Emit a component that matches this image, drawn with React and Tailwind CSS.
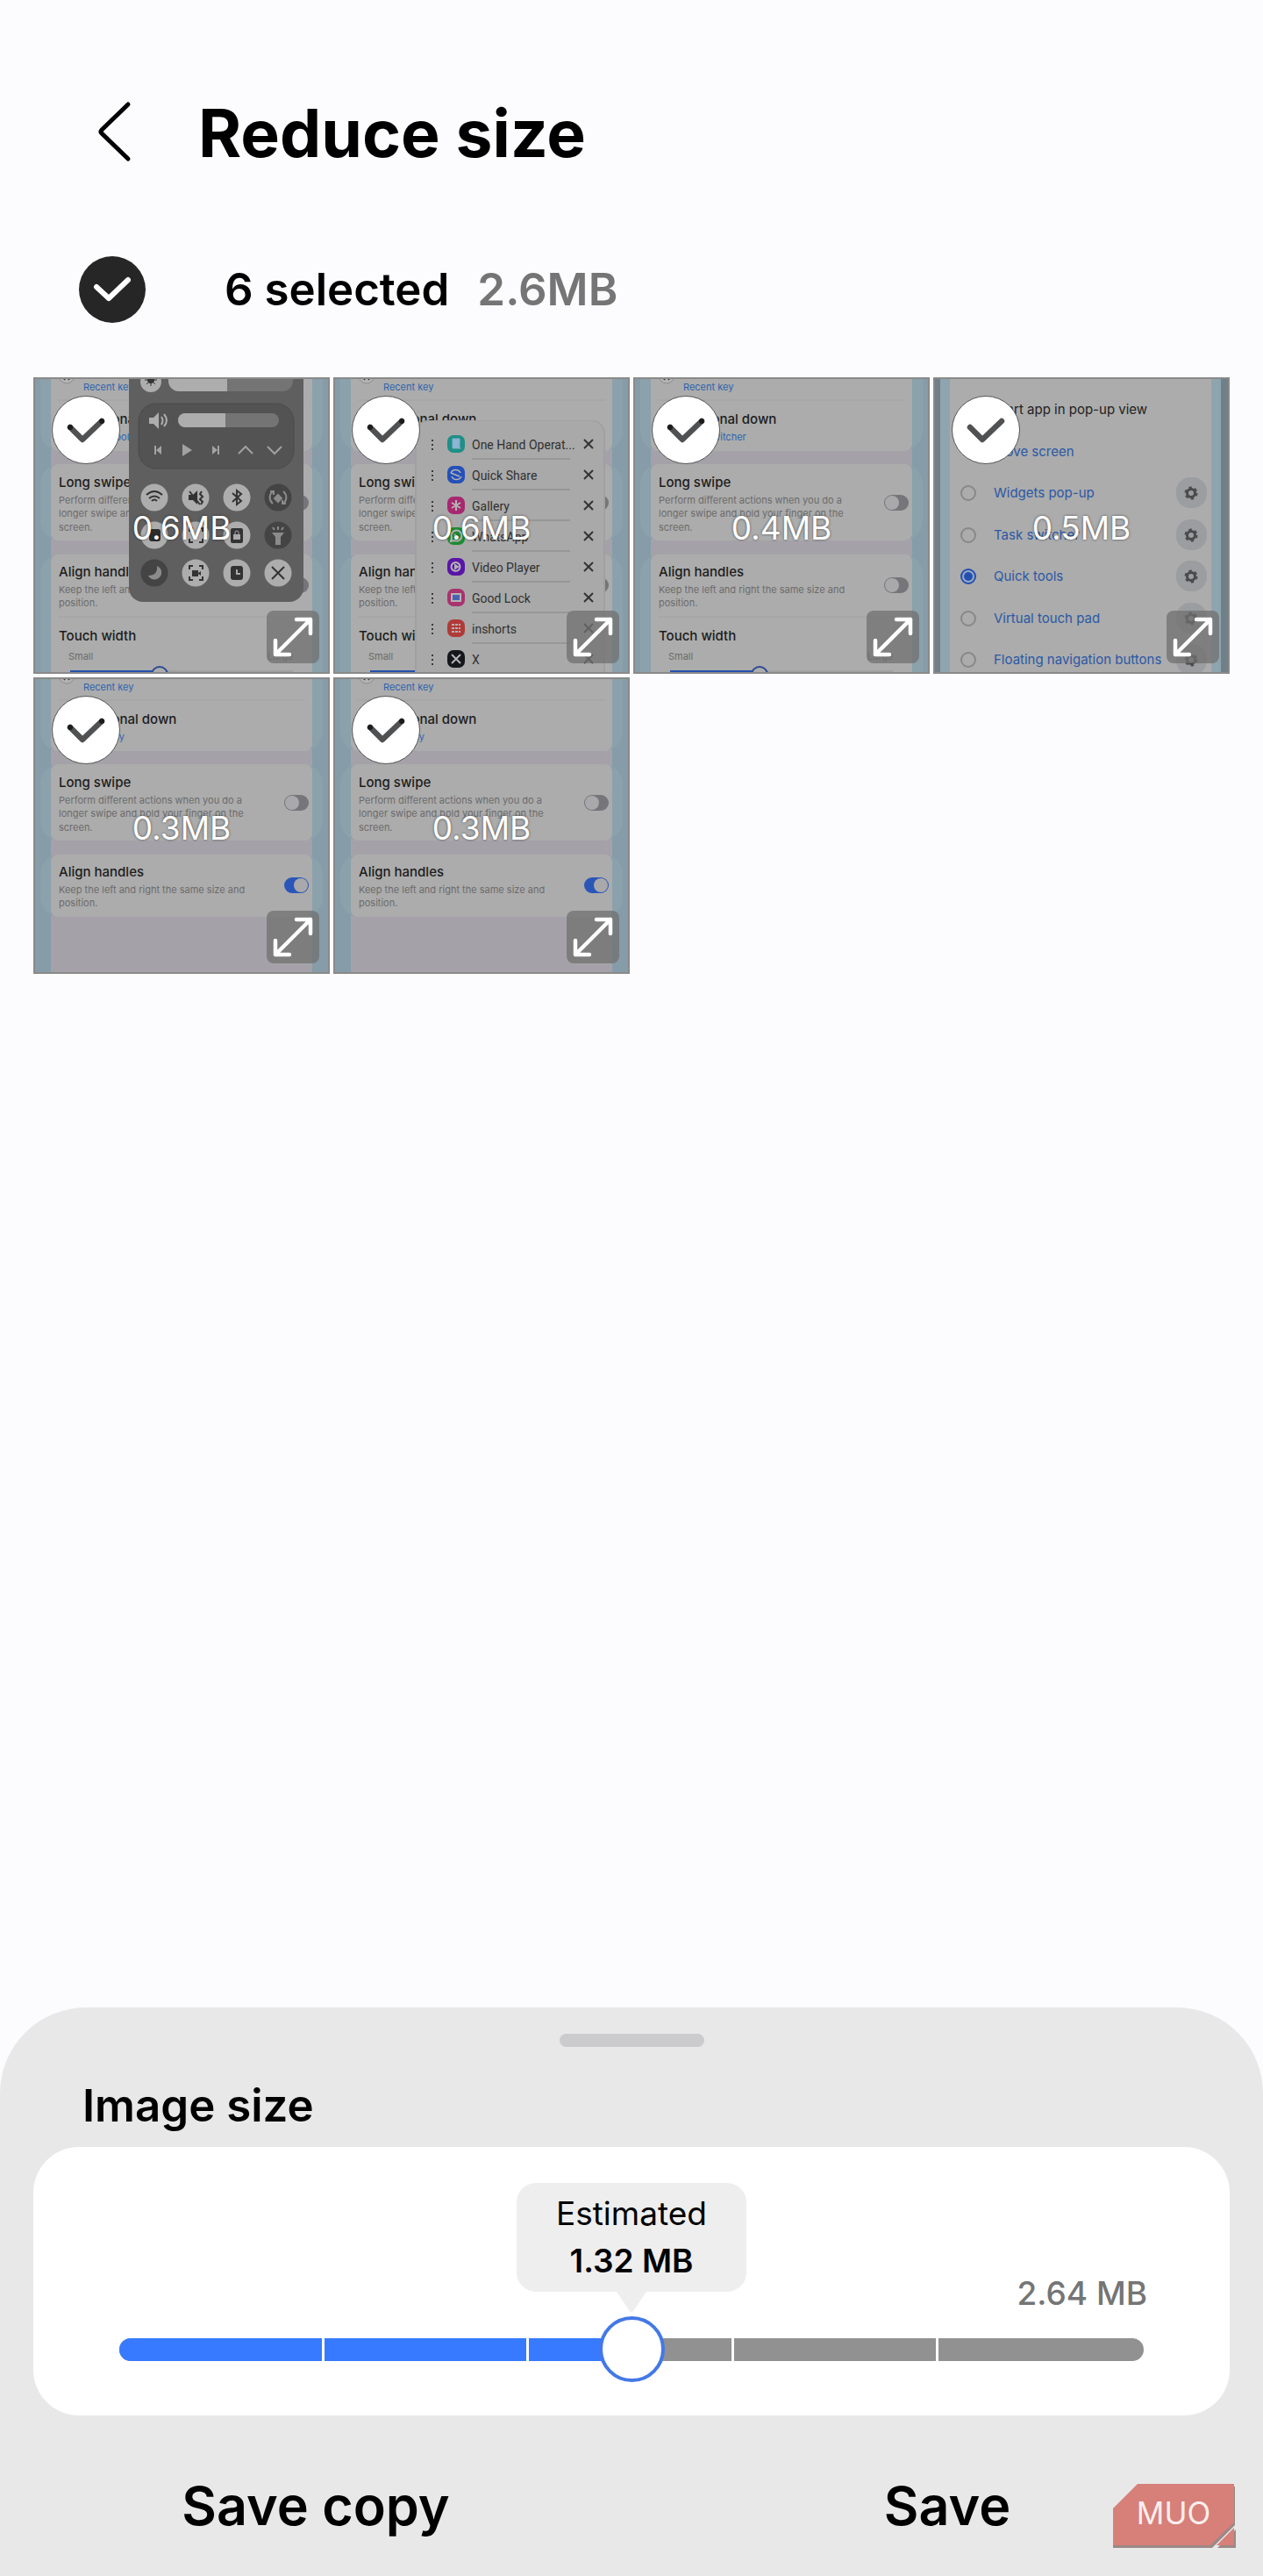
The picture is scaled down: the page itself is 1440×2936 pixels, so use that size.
import React, { useState } from 'react';

const images = [
  { id: 1, size: '0.6MB', scene: 'tools', action: 'Quick tools' },
  { id: 2, size: '0.6MB', scene: 'switcher', action: 'Task switcher' },
  { id: 3, size: '0.4MB', scene: 'settings', action: 'Task switcher' },
  { id: 4, size: '0.5MB', scene: 'actions' },
  { id: 5, size: '0.3MB', scene: 'aligned', action: 'Back key' },
  { id: 6, size: '0.3MB', scene: 'aligned', action: 'Back key' },
];

const apps = [
  { name: 'One Hand Operat...', color: '#1f8f86' },
  { name: 'Quick Share', color: '#2450b8' },
  { name: 'Gallery', color: '#a8286f' },
  { name: 'WhatsApp', color: '#1f8a35' },
  { name: 'Video Player', color: '#5a14a8' },
  { name: 'Good Lock', color: '#a8336e' },
  { name: 'inshorts', color: '#b03a38' },
  { name: 'X', color: '#15171a' },
];

const actions = ['Widgets pop-up', 'Task switcher', 'Quick tools', 'Virtual touch pad', 'Floating navigation buttons'];

const TOTAL_MB = 2.64;

const Toggle = ({ y, on }) => (
  <g>
    <rect x="286" y={y} width="28" height="18" rx="9" fill={on ? '#2a56b8' : '#75757a'} />
    <circle cx={on ? 305 : 295} cy={y + 9} r="8" fill="#a9a9ab" />
  </g>
);

const SettingsScene = ({ action, aligned }) => (
  <g>
    <rect width="338" height="338" fill="#869ca8" />
    <rect x="20" width="298" height="338" fill="#a4a2a8" />
    <g fill="#8ba1ab">
      <rect x="8" y="-30" width="322" height="114" rx="22" />
      <rect x="8" y="99" width="322" height="87" rx="22" />
      <rect x="8" y="202" width="322" height={aligned ? 71 : 180} rx="22" />
    </g>
    <g fill="#acacac">
      <rect x="20" y="-30" width="298" height="114" rx="8" />
      <rect x="20" y="99" width="298" height="87" rx="8" />
      <rect x="20" y="202" width="298" height={aligned ? 71 : 180} rx="8" />
    </g>
    <circle cx="38" cy="-2" r="9" fill="#b3b3b3" stroke="#8e8e8e" />
    <path d="M35 3l3-4 3 4" stroke="#333" strokeWidth="1.5" fill="none" />
    <path d="M28 26H310" stroke="#a2a2a2" />
    <g fontFamily="Inter, sans-serif">
      <g fontSize="11" fill="#2d65ae">
        <text x="57" y="15">Recent key</text>
        <text x="57" y="72">{action}</text>
      </g>
      <g fontSize="15" fontWeight="500" fill="#1c1c1c">
        <text x="57" y="53">Diagonal down</text>
        <text x="29" y="125">Long swipe</text>
        <text x="29" y="227">Align handles</text>
        {!aligned && <text x="29" y="300">Touch width</text>}
      </g>
      <g fontSize="11" fill="#6b6b6b">
        <text x="29" y="144">Perform different actions when you do a</text>
        <text x="29" y="159">longer swipe and hold your finger on the</text>
        <text x="29" y="175">screen.</text>
        <text x="29" y="246">Keep the left and right the same size and</text>
        <text x="29" y="261">position.</text>
        {!aligned && <text x="40" y="322">Small</text>}
        {!aligned && <text x="267" y="322">Large</text>}
      </g>
    </g>
    <Toggle y={134} />
    <Toggle y={228} on={aligned} />
    {!aligned && (
      <g>
        <path d="M28 273H310" stroke="#a2a2a2" />
        <path d="M144 336H296" stroke="#a0a0a0" strokeWidth="4" />
        <path d="M42 336H144" stroke="#2450ad" strokeWidth="4" />
        <circle cx="144" cy="339" r="9" fill="#acacac" stroke="#2c4a94" strokeWidth="2" />
      </g>
    )}
  </g>
);

const QuickToolsPanel = () => {
  const light = '#adadad';
  const dark = '#444';
  return (
    <g>
      <rect x="109" y="-20" width="199" height="276" rx="16" fill="#5f5f5f" />
      <circle cx="134" cy="5" r="12" fill={light} />
      <circle cx="134" cy="3" r="4" fill="#333" />
      <path d="M134-4v14M127 3h14M129-2l10 10M139-2l-10 10" stroke="#333" strokeWidth="1" />
      <rect x="154" y="-10" width="142" height="26" rx="12" fill="#747474" />
      <path d="M154 0V4a12 12 0 0 0 12 12H221V0Z" fill={light} />
      <rect x="120" y="30" width="177" height="74" rx="20" fill="#535353" stroke="#4a4a4a" />
      <path d="M132 46h5l6-6v19l-6-6h-5z" fill={light} />
      <path d="M146 45q3 4 0 9M149 42q6 7 0 14" fill="none" stroke={light} strokeWidth="2" />
      <rect x="165" y="41" width="115" height="16" rx="8" fill="#747474" />
      <path d="M219 41H173a8 8 0 0 0 0 16H219Z" fill={light} />
      <g fill="#a2a2a2" stroke="none">
        <path d="M138 78h2v10h-2zM146 78v10l-6-5z" />
        <path d="M170 76l11 7-11 7z" />
        <path d="M210 78h2v10h-2zM204 78v10l6-5z" />
      </g>
      <path d="M234 87l8-8 8 8M267 79l8 8 8-8" fill="none" stroke="#a2a2a2" strokeWidth="2" />
      {[137, 180, 223].map((cy, row) =>
        [138, 185, 232, 279].map((cx, col) => (
          <circle
            key={`${cx}-${cy}`}
            cx={cx}
            cy={cy}
            r="15.5"
            fill={(row < 2 && col === 3) || (row === 2 && col === 0) ? dark : light}
          />
        ))
      )}
      <g fill="none" stroke="#333" strokeWidth="2">
        <path d="M129 134q9-8 18 0M132 138q6-5 12 0M135 141q3-3 6 0" />
        <path d="M227 132l10 9-5 4V129l5 4-10 9" />
        <path d="M192 130l-2 3 3 3-3 3 3 3-2 3M178 130l12 15" />
        <path d="M272 216l14 14M286 216l-14 14" />
        <path d="M178 219v-4h4M189 215h4v4M193 227v4h-4M182 231h-4v-4" />
        <path d="M178 176v-4h4M189 172h4v4M193 184v4h-4M182 188h-4v-4" />
      </g>
      <path d="M177 134h5l5-5v16l-5-5h-5zM181 220h7v7h-7zM188 223l3-2v5l-3-2z" fill="#333" />
      <rect x="132" y="173" width="13" height="14" rx="3" fill="#2c2c2c" />
      <rect x="225" y="172" width="14" height="17" rx="2" fill="#333" />
      <path d="M228 179h8v6h-8z" fill="#aaa" />
      <path d="M230 179v-2a2 2 0 0 1 4 0v2" fill="none" stroke="#aaa" />
      <rect x="225" y="215" width="14" height="16" rx="3" fill="#333" />
      <path d="M232 219v5h4" stroke="#aaa" strokeWidth="2" fill="none" />
      <path d="M141 215a8 8 0 1 1-10 11q11 0 10-11z" fill="#8b8b8b" />
      <g fill="none" stroke="#8b8b8b" strokeWidth="2">
        <path d="M273 144a9 9 0 0 1 0-14M285 130a9 9 0 0 1 0 14M270 130h4v4M288 144h-4v-4" />
        <path d="M279 134l4 4-4 4-4-4z" fill="#8b8b8b" />
        <path d="M279 170v4M273 171l2 3M285 171l-2 3" />
      </g>
      <path d="M272 177h14l-4 5v9h-6v-9z" fill="#8b8b8b" />
    </g>
  );
};

const AppIcon = ({ index, cy }) => (
  <g transform={`translate(140 ${cy})`} fill="none" stroke="#b4b4b4" strokeWidth="2">
    <rect x="-10" y="-10" width="20" height="20" rx="7" fill={apps[index].color} stroke="none" />
    {index === 0 && <path d="M-4-6H4V5H-4zM2 0l3 6" fill="#8fb5d8" stroke="#7fb0c0" strokeWidth="1" />}
    {index === 1 && <path d="M-6-2a6 6 0 0 1 11 0M6 2a6 6 0 0 1-11 0M-6-2l10 4" strokeWidth="1.5" />}
    {index === 2 && <path d="M0-6V6M-5-3L5 3M5-3L-5 3" />}
    {index === 3 && <path d="M-6 6l1-4a6 6 0 1 1 3 3zM-2-2l4 4" />}
    {index === 4 && <path d="M0-5a5 5 0 1 1-1 0zM-1-2V2L2 0z" />}
    {index === 5 && <path d="M-5-4H5V4H-5z" fill="#4a62b0" />}
    {index === 6 && <path d="M-5-4H5M-5 0H5M-5 4H5" strokeDasharray="3 1" />}
    {index === 7 && <path d="M-5-5L5 5M5-5L-5 5" />}
  </g>
);

const TaskSwitcherPanel = () => (
  <g>
    <rect x="93" y="49" width="217" height="310" rx="15" fill="#a0a0a0" />
    <rect x="95" y="50" width="213" height="310" rx="14" fill="#a9a9a9" />
    {apps.map((app, index) => {
      const cy = 76 + index * 35;
      return (
        <g key={app.name}>
          <path d={`M113 ${cy - 5}v12`} stroke="#3a3a3a" strokeWidth="2" strokeDasharray="2 3" />
          <AppIcon index={index} cy={cy} />
          <text x="158" y={cy + 6} fontSize="14" fontFamily="Roboto, sans-serif" fill="#303030">{app.name}</text>
          <path d={`M286 ${cy - 5}l10 10M296 ${cy - 5}l-10 10`} stroke="#333" strokeWidth="2" />
          <path d={`M158 ${cy + 17}H270`} stroke="#858585" />
        </g>
      );
    })}
  </g>
);

const ActionsScene = () => (
  <g>
    <rect width="338" height="338" fill="#6f8089" />
    <rect x="8" width="320" height="338" fill="#8ea4ae" />
    <rect x="19" width="298" height="338" fill="#acacac" />
    <g fontFamily="Inter, sans-serif" fontSize="15">
      <text x="69" y="42" fill="#222">Start app in pop-up view</text>
      <text x="69" y="90" fill="#2b58a5">Move screen</text>
      {actions.map((name, index) => {
        const cy = Math.round(132 + index * 47.5);
        const active = name === 'Quick tools';
        return (
          <g key={name}>
            <circle cx="40" cy={cy} r="8" fill={active ? '#9aa8cc' : 'none'} stroke={active ? '#2450ad' : '#888'} strokeWidth="2" />
            {active && <circle cx="40" cy={cy} r="5" fill="#2450ad" />}
            <text x="69" y={cy + 5} fill="#2b58a5">{name}</text>
            <rect x="277" y={cy - 18} width="35" height="35" rx="16" fill="#9b9da0" />
            <circle cx="294" cy={cy} r="4.5" fill="none" stroke="#4a4a4a" strokeWidth="3" />
            <circle cx="294" cy={cy} r="6.5" fill="none" stroke="#4a4a4a" strokeWidth="2" strokeDasharray="3.4 3.4" />
          </g>
        );
      })}
    </g>
  </g>
);

const Thumbnail = ({ image }) => {
  const [checked, setChecked] = useState(true);

  return (
    <li className="relative">
      <svg viewBox="0 0 338 338" className="block w-full" aria-hidden="true">
        {image.scene === 'actions' ? (
          <ActionsScene />
        ) : (
          <SettingsScene action={image.action} aligned={image.scene === 'aligned'} />
        )}
        {image.scene === 'tools' && <QuickToolsPanel />}
        {image.scene === 'switcher' && <TaskSwitcherPanel />}
        <rect x="1" y="1" width="336" height="336" fill="none" stroke="#8a8a8a" strokeWidth="2" />
      </svg>
      <span className="absolute inset-0 flex items-center justify-center pt-1 text-[37px] leading-none text-white [text-shadow:0_0_3px_rgb(0_0_0/0.6)]">
        {image.size}
      </span>
      <label className="absolute top-[21px] left-[21px] size-[78px] rounded-full border border-[#555] bg-white">
        <input
          type="checkbox"
          className="sr-only"
          checked={checked}
          onChange={() => setChecked(!checked)}
          aria-label={`Select image ${image.id}`}
        />
        {checked && (
          <svg viewBox="0 0 76 76" className="size-full" fill="none" strokeLinecap="round" strokeLinejoin="round">
            <path d="M20 35L34 49L56 28" stroke="#505152" strokeWidth="6.5" />
            {image.scene !== 'actions' && <path d="M20 35h.1M56 28h.1" stroke="#1c1c1c" strokeWidth="6" />}
          </svg>
        )}
      </label>
      <button
        type="button"
        aria-label="View image"
        className="absolute right-3 bottom-3 size-[60px] rounded-lg bg-[#707070]/75"
      >
        <svg viewBox="0 0 60 60" className="size-full" fill="none" stroke="#fff" strokeWidth="4.5" strokeLinecap="round" strokeLinejoin="round">
          <path d="M34 10H50V26M50 10L10 50M10 34V50H26" />
        </svg>
      </button>
    </li>
  );
};

const MuoBadge = () => (
  <svg viewBox="0 0 142 76" className="absolute right-[30px] bottom-[30px] h-[76px] w-[142px]">
    <g fill="#9a8886">
      <path d="M1 32L29 4H140V48L114 74H1Z" />
      <path d="M120 74L141 53V74Z" />
    </g>
    <g fill="#d77f79">
      <path d="M1 29L29 1H139V45L112 71H1Z" />
      <path d="M119 71L139 51V71Z" />
    </g>
    <text x="70" y="47" textAnchor="middle" fontFamily="Inter, sans-serif" fontSize="35" fill="#fbeeee">MUO</text>
  </svg>
);

const App = () => {
  const [allSelected, setAllSelected] = useState(true);
  const [quality, setQuality] = useState(50);

  return (
    <div className="flex min-h-screen flex-col bg-[#fcfcff] font-['Inter',sans-serif] text-black">
      <header className="flex h-[300px] items-center gap-[66px] pl-[104px]">
        <button type="button" aria-label="Back" className="h-[80px] w-[56px]">
          <svg viewBox="0 0 56 80" className="size-full" fill="none" stroke="currentColor" strokeWidth="5" strokeLinecap="round" strokeLinejoin="round">
            <path d="M42 9L12 38Q10 40 12 42L42 71" />
          </svg>
        </button>
        <h1 className="pt-0.5 text-[75px] leading-none font-bold">Reduce size</h1>
      </header>

      <main className="flex-1">
        <div className="flex h-[130px] items-start gap-[90px] pl-[90px]">
          <label className="-mt-2 size-[76px] shrink-0 rounded-full bg-[#262626]">
            <input
              type="checkbox"
              className="sr-only"
              checked={allSelected}
              onChange={() => setAllSelected(!allSelected)}
              aria-label="Select all"
            />
            {allSelected && (
              <svg viewBox="0 0 76 76" className="size-full" fill="none" stroke="#fff" strokeWidth="6" strokeLinecap="round" strokeLinejoin="round">
                <path d="M20 35L34 48L56 27" />
              </svg>
            )}
          </label>
          <p className="flex gap-8 text-[51px] leading-[60px] font-semibold">
            <span>6 selected</span>
            <span className="text-[#757575]">2.6MB</span>
          </p>
        </div>

        <ul className="grid grid-cols-4 gap-1 px-[38px]">
          {images.map((image) => (
            <Thumbnail key={image.id} image={image} />
          ))}
        </ul>
      </main>

      <section className="relative rounded-t-[98px] bg-[#e8e8e8] px-[38px] pt-[30px]">
        <div className="mx-auto h-[15px] w-[165px] rounded-full bg-[#cbcbcd]"></div>
        <h2 className="mt-9 mb-4 pl-14 text-[51px] leading-[62px] font-semibold">
          <label htmlFor="image-size">Image size</label>
        </h2>

        <div className="rounded-[52px] bg-white px-[98px] pt-[41px] pb-[38px]">
          <div className="grid grid-cols-3 items-end text-[37px]">
            <div className="relative col-start-2 mx-auto mb-6 w-[262px] rounded-[22px] bg-[#eee] py-2 text-center leading-[54px]">
              <p>Estimated</p>
              <p className="font-semibold">{((TOTAL_MB * quality) / 100).toFixed(2)} MB</p>
              <svg viewBox="0 0 34 24" className="absolute top-full left-1/2 h-6 w-[34px] -translate-x-1/2" fill="#eee">
                <path d="M0 0H34L19 22Q17 24 15 22Z" />
              </svg>
            </div>
            <p className="-mr-1 text-right leading-[44px] font-medium text-[#757575]">{TOTAL_MB} MB</p>
          </div>
          <div className="relative mt-1 flex h-[75px] items-center">
            <div className="relative h-[26px] w-full overflow-hidden rounded-full bg-[#919191]">
              <div className="h-full bg-[#387aff]" style={{ width: `${quality}%` }}></div>
              <div className="absolute inset-0 grid grid-cols-5 divide-x-3 divide-white">
                <span></span>
                <span></span>
                <span></span>
                <span></span>
                <span></span>
              </div>
            </div>
            <input
              id="image-size"
              type="range"
              value={quality}
              onChange={(e) => setQuality(Number(e.target.value))}
              className="absolute inset-0 w-full appearance-none bg-transparent [&::-webkit-slider-thumb]:size-[75px] [&::-webkit-slider-thumb]:appearance-none [&::-webkit-slider-thumb]:rounded-full [&::-webkit-slider-thumb]:border-4 [&::-webkit-slider-thumb]:border-[#4478e6] [&::-webkit-slider-thumb]:bg-white"
            />
          </div>
        </div>

        <div className="-mx-[38px] grid h-[183px] grid-cols-2 pt-6 text-[61px] font-semibold">
          <button type="button">Save copy</button>
          <button type="button">Save</button>
        </div>
        <MuoBadge />
      </section>
    </div>
  );
};

export default App;
